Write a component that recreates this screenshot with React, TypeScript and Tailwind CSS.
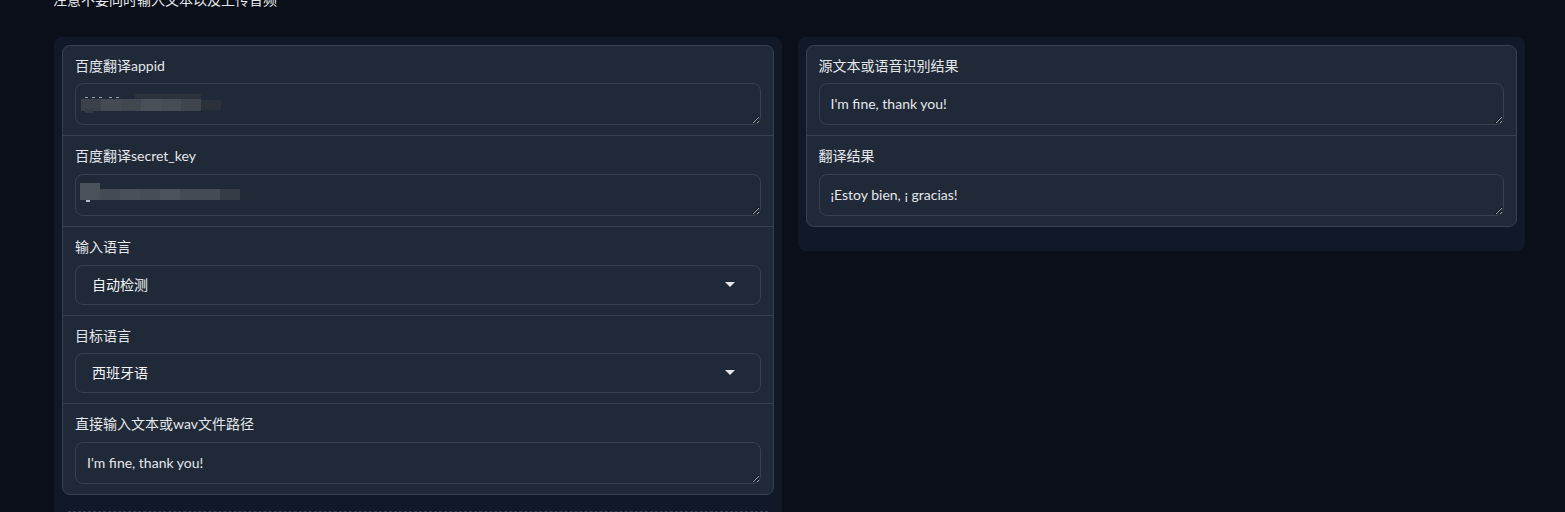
import React from "react";

const FONT = { fontFamily: 'Lato, "Noto Sans CJK SC", sans-serif' };

// blurred pixel blocks covering private values
function Redacted({ blocks }: { blocks: { x: number; y: number; w: number; h: number; c: string }[] }) {
	return (
		<>
			{blocks.map((b, i) => (
				<div
					key={i}
					className="absolute pointer-events-none"
					style={{ left: b.x, top: b.y, width: b.w, height: b.h, background: b.c }}
				/>
			))}
		</>
	);
}

const appidBlur = [
	{ x: 6, y: 16, w: 20, h: 12, c: "#3b414b" },
	{ x: 10, y: 26, w: 8, h: 4, c: "#363c46" },
	{ x: 26, y: 16, w: 20, h: 12, c: "#454b55" },
	{ x: 46, y: 16, w: 20, h: 12, c: "#42484f" },
	{ x: 66, y: 16, w: 20, h: 12, c: "#4a505a" },
	{ x: 86, y: 16, w: 20, h: 12, c: "#474d56" },
	{ x: 106, y: 16, w: 20, h: 12, c: "#3f454f" },
	{ x: 126, y: 17, w: 20, h: 10, c: "#2b313b" },
	{ x: 60, y: 11, w: 66, h: 5, c: "#2c323c" },
	{ x: 10, y: 14, w: 3, h: 1, c: "#9ca1a9" },
	{ x: 17, y: 14, w: 3, h: 1, c: "#9ca1a9" },
	{ x: 24, y: 14, w: 3, h: 1, c: "#9ca1a9" },
	{ x: 34, y: 14, w: 3, h: 1, c: "#9ca1a9" },
	{ x: 41, y: 14, w: 3, h: 1, c: "#9ca1a9" },
];

const keyBlur = [
	{ x: 5, y: 9, w: 20, h: 17, c: "#4b515b" },
	{ x: 25, y: 15, w: 20, h: 11, c: "#454b55" },
	{ x: 45, y: 15, w: 20, h: 11, c: "#4a505a" },
	{ x: 65, y: 15, w: 20, h: 11, c: "#474d57" },
	{ x: 85, y: 15, w: 20, h: 11, c: "#4d535d" },
	{ x: 105, y: 15, w: 40, h: 11, c: "#454b55" },
	{ x: 145, y: 15, w: 20, h: 11, c: "#363c46" },
	{ x: 11, y: 26, w: 4, h: 2, c: "#b9bcc2" },
];

function TextRow({
	label,
	value,
	blur,
	first,
}: {
	label: string;
	value?: string;
	blur?: { x: number; y: number; w: number; h: number; c: string }[];
	first?: boolean;
}) {
	return (
		<div className={`px-3 pt-[10px] pb-[10px] ${first ? "" : "border-t border-[#374151]"}`}>
			<div className="h-5 leading-5 text-sm text-[#e5e7eb]">{label}</div>
			<div className={`relative ${first ? "mt-[7px]" : "mt-2"}`}>
				<textarea
					readOnly
					defaultValue={value ?? ""}
					rows={1}
					style={FONT}
					className="block w-full h-[42px] rounded-lg border border-[#374151] bg-[#1f2937] px-[11px] py-[10px] text-sm leading-5 text-[#e5e7eb] outline-none resize-y [color-scheme:dark]"
				/>
				{blur && <Redacted blocks={blur} />}
			</div>
		</div>
	);
}

function SelectRow({ label, value, tight }: { label: string; value: string; tight?: boolean }) {
	return (
		<div className="px-3 pt-[10px] pb-[10px] border-t border-[#374151]">
			<div className="h-5 leading-5 text-sm text-[#e5e7eb]">{label}</div>
			<div
				className={`${tight ? "mt-[7px]" : "mt-2"} flex items-center h-10 rounded-lg border border-[#374151] bg-[#1f2937] pl-4 pr-[25px]`}
			>
				<span className="flex-1 text-sm text-[#f3f4f6]">{value}</span>
				<svg width="10" height="6" viewBox="0 0 10 6">
					<polygon points="0,0 10,0 5,5" fill="#e5e7eb" />
				</svg>
			</div>
		</div>
	);
}

export default function App() {
	return (
		<div className="min-h-screen bg-[#0b0f19] pl-[54px] pr-[40px] overflow-hidden" style={FONT}>
			<div className="-mt-[10px] h-5 leading-5 text-sm text-[#e5e7eb] -ml-px">
				注意不要同时输入文本以及上传音频
			</div>
			<div className="mt-[27px] flex gap-4 items-start">
				{/* left column */}
				<div className="flex-1 rounded-lg bg-[#111827] p-2 pb-0">
					<div className="rounded-lg border border-[#374151] bg-[#1f2937]">
						<TextRow first label="百度翻译appid" blur={appidBlur} />
						<TextRow label="百度翻译secret_key" blur={keyBlur} />
						<SelectRow label="输入语言" value="自动检测" />
						<SelectRow label="目标语言" value="西班牙语" tight />
						<TextRow label="直接输入文本或wav文件路径" value="I'm fine, thank you!" />
					</div>
					<div className="mt-[16px] ml-[6px] mr-[6px] h-10 border-t border-dashed border-[#374151]" />
				</div>
				{/* right column */}
				<div className="flex-1 rounded-lg bg-[#111827] p-2 pb-6">
					<div className="rounded-lg border border-[#374151] bg-[#1f2937]">
						<TextRow first label="源文本或语音识别结果" value="I'm fine, thank you!" />
						<TextRow label="翻译结果" value="¡Estoy bien, ¡ gracias!" />
					</div>
				</div>
			</div>
		</div>
	);
}
